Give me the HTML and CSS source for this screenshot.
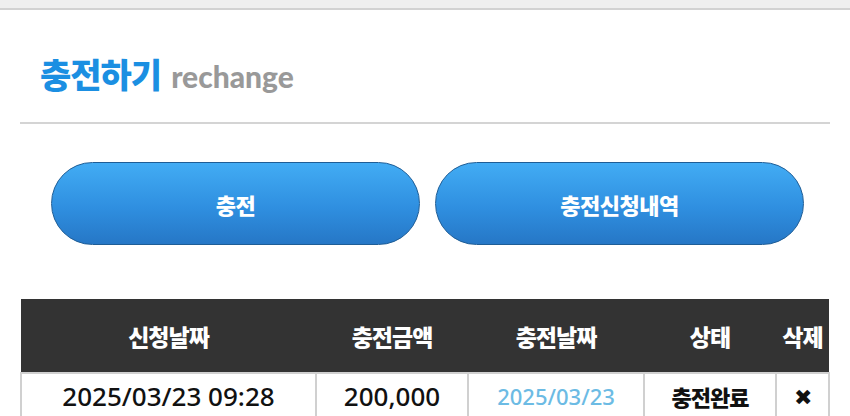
FILE: index.html
```html
<!DOCTYPE html>
<html lang="ko">
<head>
  <meta charset="UTF-8">
  <meta name="viewport" content="width=device-width, initial-scale=1.0">
  <title>충전하기</title>
  <link rel="stylesheet" href="styles.css">
</head>
<body>
  <div class="topbar"></div>

  <div class="container">
    <!-- 제목 -->
    <div class="page-title">
      <h1>충전하기</h1>
      <span class="sub">rechange</span>
    </div>

    <!-- 탭 버튼 -->
    <div class="tabs">
      <button class="tab-btn">충전</button>
      <button class="tab-btn">충전신청내역</button>
    </div>

    <!-- 신청 내역 -->
    <table class="history">
      <thead>
        <tr>
          <th class="col-date">신청날짜</th>
          <th class="col-amount">충전금액</th>
          <th class="col-done">충전날짜</th>
          <th class="col-state">상태</th>
          <th class="col-del">삭제</th>
        </tr>
      </thead>
      <tbody>
        <tr>
          <td>2025/03/23 09:28</td>
          <td>200,000</td>
          <td class="done-date">2025/03/23</td>
          <td class="state">충전완료</td>
          <td class="del">&#10006;</td>
        </tr>
      </tbody>
    </table>
  </div>
</body>
</html>
```

FILE: styles.css
```css
body {
  margin: 0;
  padding: 0;
  background: #ffffff;
  font-family: "Noto Sans", "Noto Sans CJK KR", sans-serif;
  overflow: hidden;
}
.topbar {
  height: 8px;
  background: #efefef;
  border-bottom: 2px solid #d2d2d2;
}
.container {
  padding: 0 20px 0 20px;
}

/* 제목 */
.page-title {
  display: flex;
  align-items: baseline;
  padding: 44px 0 0 20px;
  height: 68px;
  border-bottom: 2px solid #d4d4d4;
}
.page-title h1 {
  margin: 0;
  font-family: "Noto Sans CJK KR", sans-serif;
  font-weight: 900;
  font-size: 34px;
  letter-spacing: -1px;
  color: #1b8fe2;
  line-height: 40px;
}
.page-title .sub {
  margin-left: 10px;
  font-family: "Lato", "Noto Sans", sans-serif;
  font-weight: 900;
  font-size: 30px;
  color: #999999;
}

/* 탭 버튼 */
.tabs {
  display: flex;
  gap: 15px;
  padding: 38px 26px 0 31px;
}
.tab-btn {
  flex: 1;
  height: 83px;
  border: 1px solid #1e5d96;
  border-radius: 42px;
  background: linear-gradient(to bottom, #42acf4 0%, #2f8fe0 55%, #2677c6 100%);
  color: #ffffff;
  font-family: "Noto Sans CJK KR", sans-serif;
  font-weight: 900;
  font-size: 22px;
  letter-spacing: -0.5px;
  cursor: pointer;
}

/* 신청 내역 */
.history {
  width: 100%;
  margin-top: 54px;
  border-collapse: collapse;
}
.history th {
  height: 73px;
  background: #333333;
  color: #ffffff;
  font-family: "Noto Sans CJK KR", sans-serif;
  font-weight: 900;
  font-size: 23px;
  letter-spacing: -1px;
  padding: 0;
}
.history td {
  height: 44px;
  border: 2px solid #d0d0d0;
  border-bottom: none;
  text-align: center;
  font-size: 26px;
  font-weight: 500;
  color: #111111;
  padding: 0;
}
.col-date { width: 295px; }
.col-amount { width: 152px; }
.col-done { width: 176px; }
.col-state { width: 132px; }
.history td.done-date {
  color: #6cbbe4;
  font-size: 22px;
}
.history td.state {
  font-family: "Noto Sans CJK KR", sans-serif;
  font-weight: 900;
  font-size: 22px;
  letter-spacing: -1px;
}
.history td.del {
  font-size: 22px;
  color: #111111;
}
```
